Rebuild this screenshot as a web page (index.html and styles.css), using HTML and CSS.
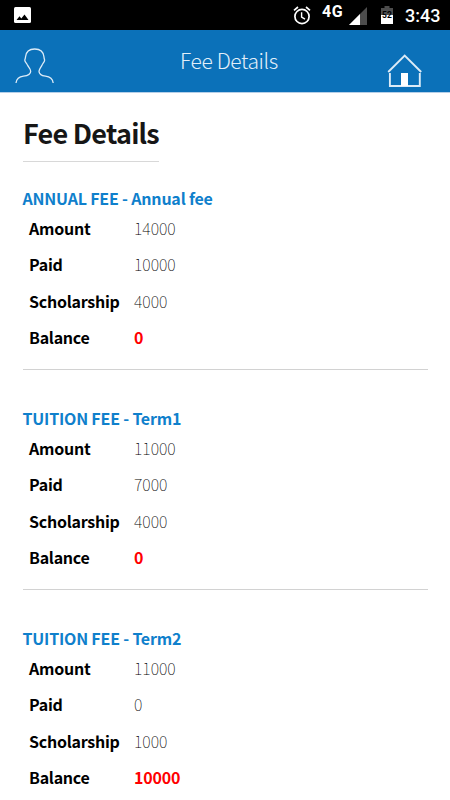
FILE: index.html
```html
<!DOCTYPE html>
<html lang="en">
<head>
    <meta charset="utf-8">
    <title>Fee Details</title>
    <link rel="stylesheet" href="styles.css">
</head>
<body>
    <div class="status-bar">
        <svg class="icon-picture" width="17" height="16" viewBox="0 0 17 16">
            <rect width="17" height="16" rx="1.5" fill="#fff"/>
            <path d="M2.5 13 L5.5 9.3 L7.3 11.5 L10.5 7.5 L14.5 13 Z" fill="#000"/>
        </svg>
        <div class="status-right">
            <svg class="icon-alarm" width="18" height="19" viewBox="0 0 18 19" fill="none" stroke="#fff">
                <circle cx="9" cy="10.5" r="7.1" stroke-width="1.7"/>
                <path d="M1 4.3 L5 1 M17 4.3 L13 1" stroke-width="1.7"/>
                <path d="M8.6 6.2 V11 L12 13.2" stroke-width="1.4"/>
            </svg>
            <span class="network">4G</span>
            <svg class="icon-signal" width="18" height="18" viewBox="0 0 18 18">
                <path d="M0 18 L18 0 V18 Z" fill="#4d4d4d"/>
                <path d="M0 18 L11 7 V18 Z" fill="#fff"/>
            </svg>
            <svg class="icon-battery" width="12" height="18" viewBox="0 0 12 18">
                <path d="M0 2 H3.5 V0 H8.5 V2 H12 V9 H0 Z" fill="#4d4d4d"/>
                <path d="M0 9 H12 V18 H0 Z" fill="#fff"/>
                <text x="6" y="11.8" text-anchor="middle" class="battery-level">52</text>
            </svg>
            <span class="clock">3:43</span>
        </div>
    </div>

    <div class="header">
        <svg class="icon-user" width="40" height="36" viewBox="0 0 40 36" fill="none" stroke="#dcebf7" stroke-width="1.3">
            <path d="M1 35 C1.5 31 4 28.8 8.5 28.2 C13 27.6 15.7 26 15.7 23.2 C15.7 21 13.5 19.5 12.2 16.5 C11.8 15.4 9.8 14 9.8 12.3 C9.8 11 10.5 10.8 10.5 9 C11 4 14.5 1 19.7 1 C25 1 28.5 4 29 9 C29 10.8 29.6 11 29.6 12.3 C29.6 14 27.7 15.4 27.3 16.5 C26 19.5 24 21 24 23.2 C24 26 26.5 27.6 30.5 28.2 C35 28.8 37.7 31 38.2 35"/>
        </svg>
        <span class="header-title">Fee Details</span>
        <svg class="icon-home" width="36" height="34" viewBox="0 0 36 34">
            <path d="M1.2 18 L17.7 1.5 L34.2 18" fill="none" stroke="#dcebf7" stroke-width="1.9"/>
            <path d="M2.9 19 V32 H32.8 V19" fill="none" stroke="#dcebf7" stroke-width="1.9"/>
            <rect x="14" y="19" width="7" height="13" fill="#fff"/>
        </svg>
    </div>

    <div class="content">
        <h1>Fee Details</h1>

        <div class="fee">
            <h2>ANNUAL FEE - Annual fee</h2>
            <dl>
                <dt>Amount</dt><dd>14000</dd>
                <dt>Paid</dt><dd>10000</dd>
                <dt>Scholarship</dt><dd>4000</dd>
                <dt>Balance</dt><dd class="balance">0</dd>
            </dl>
        </div>

        <div class="fee">
            <h2>TUITION FEE - Term1</h2>
            <dl>
                <dt>Amount</dt><dd>11000</dd>
                <dt>Paid</dt><dd>7000</dd>
                <dt>Scholarship</dt><dd>4000</dd>
                <dt>Balance</dt><dd class="balance">0</dd>
            </dl>
        </div>

        <div class="fee">
            <h2>TUITION FEE - Term2</h2>
            <dl>
                <dt>Amount</dt><dd>11000</dd>
                <dt>Paid</dt><dd>0</dd>
                <dt>Scholarship</dt><dd>1000</dd>
                <dt>Balance</dt><dd class="balance">10000</dd>
            </dl>
        </div>
    </div>
</body>
</html>
```
FILE: styles.css
```css
* {
    box-sizing: border-box;
}

body {
    margin: 0;
    height: 800px;
    overflow: hidden;
    background: #fff;
    color: #000;
    font-family: "Noto Sans CJK SC", "Noto Sans", sans-serif;
}

svg {
    display: block;
    flex: none;
}

.status-bar {
    display: flex;
    justify-content: space-between;
    height: 30px;
    padding: 0 10px 0 14px;
    background: #000;
    color: #fff;
    font-family: Roboto, sans-serif;
}

.icon-picture {
    margin-top: 7px;
}

.status-right {
    display: flex;
}

.icon-alarm {
    margin-top: 6px;
}

.network {
    margin: 2px 0 0 11px;
    width: 23px;
    font-size: 16px;
    font-weight: 700;
    line-height: 19px;
    letter-spacing: 0.5px;
}

.icon-signal {
    margin: 7px 14px 0 4px;
}

.icon-battery {
    margin-top: 6px;
}

.battery-level {
    font-size: 8.5px;
    font-weight: 700;
}

.clock {
    margin-left: 12px;
    width: 35px;
    font-size: 18px;
    font-weight: 500;
    line-height: 32px;
    white-space: nowrap;
}

.header {
    display: flex;
    height: 63px;
    padding: 0 27px 0 15px;
    background: #0b71b9;
    border-bottom: 1px solid #b5cfe8;
    color: #e3eff9;
}

.icon-user {
    margin-top: 18px;
}

.header-title {
    flex: 1;
    padding-left: 16px;
    font-size: 21px;
    font-weight: 300;
    line-height: 60px;
    letter-spacing: -0.4px;
    text-align: center;
}

.icon-home {
    margin-top: 24px;
}

.content {
    padding: 20px 22px 0 23px;
}

h1 {
    width: fit-content;
    height: 49px;
    margin: 0 0 26px;
    border-bottom: 1px solid #d8d8d8;
    color: #161616;
    font-size: 27px;
    font-weight: 700;
    line-height: 39px;
    letter-spacing: -0.75px;
}

.fee {
    height: 182px;
    margin-bottom: 38px;
    border-bottom: 1px solid #d2d2d2;
}

h2 {
    margin: 0 0 0 -0.5px;
    color: #0f80cc;
    font-size: 16px;
    font-weight: 700;
    line-height: 20px;
    letter-spacing: -0.2px;
}

dl {
    display: grid;
    grid-template-columns: 105px 1fr;
    margin: 2px 0 0 6px;
    font-size: 16px;
    line-height: 36.3px;
}

dt {
    font-weight: 700;
    letter-spacing: -0.25px;
}

dd {
    margin: 0;
    font-weight: 100;
}

.balance {
    color: #f00;
    font-weight: 700;
    letter-spacing: -0.2px;
}
```
